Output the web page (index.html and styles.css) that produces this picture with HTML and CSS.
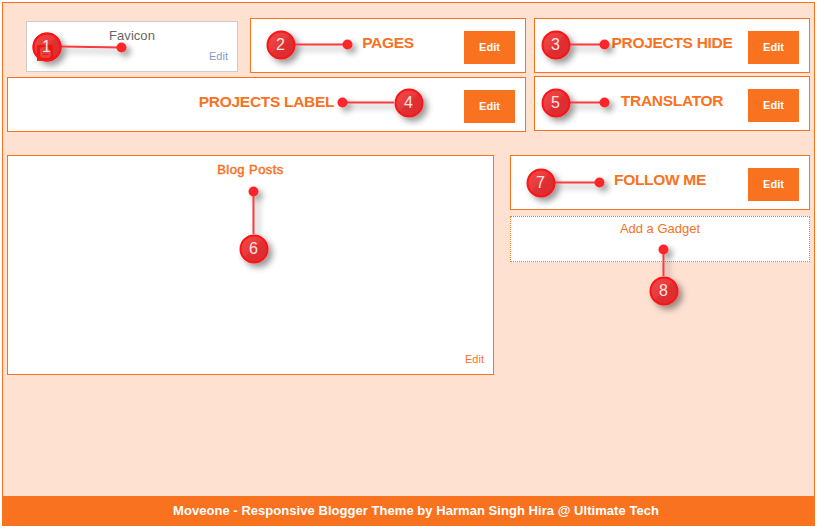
FILE: index.html
```html
<!DOCTYPE html>
<html lang="en">
<head>
<meta charset="utf-8">
<title>Moveone layout</title>
<link rel="stylesheet" href="styles.css">
</head>
<body>
<div class="frame">
  <main class="content">
    <div class="row top">
      <div class="left">
        <div class="row first">
          <section class="favicon"><h2>Favicon</h2><a class="link">Edit</a></section>
          <section class="box pages"><h2>PAGES</h2><a class="button">Edit</a></section>
        </div>
        <section class="box label"><h2>PROJECTS LABEL</h2><a class="button">Edit</a></section>
      </div>
      <div class="right">
        <section class="box"><h2>PROJECTS HIDE</h2><a class="button">Edit</a></section>
        <section class="box"><h2>TRANSLATOR</h2><a class="button">Edit</a></section>
      </div>
    </div>
    <div class="row bottom">
      <section class="posts"><h2>Blog Posts</h2><a class="link">Edit</a></section>
      <div class="side">
        <section class="box follow"><h2>FOLLOW ME</h2><a class="button">Edit</a></section>
        <section class="gadget"><a>Add a Gadget</a></section>
      </div>
    </div>
  </main>
  <footer class="footer">Moveone - Responsive Blogger Theme by Harman Singh Hira @ Ultimate Tech</footer>
</div>
<svg class="callouts" width="817" height="528" viewBox="0 0 817 528">
  <defs>
    <linearGradient id="disc" x1="0" y1="0" x2="1" y2="1">
      <stop offset="0" stop-color="#f44a4a"/><stop offset=".46" stop-color="#e63b3d"/><stop offset=".5" stop-color="#df3033"/><stop offset="1" stop-color="#df2b2e"/>
    </linearGradient>
    <filter id="shadow" filterUnits="userSpaceOnUse" x="0" y="0" width="817" height="528">
      <feDropShadow dx="4" dy="4" stdDeviation="3.4" flood-color="#000" flood-opacity=".4"/>
    </filter>
  </defs>
  <g filter="url(#shadow)">
    <g class="lines">
      <path d="M61 46.5L121 47.5M295 44.5H347M570 44.5H604M342 102.5H394M570 102.5H604M253.5 191V234M555 182.5H599M663.5 249V276"/>
    </g>
    <g class="dots">
      <circle cx="121.5" cy="47.5" r="5"/><circle cx="347.5" cy="44.5" r="5"/><circle cx="604.5" cy="44.5" r="5"/><circle cx="342.5" cy="102.5" r="5"/>
      <circle cx="604.5" cy="102.5" r="5"/><circle cx="253.5" cy="191.5" r="5"/><circle cx="599.5" cy="182.5" r="5"/><circle cx="663.5" cy="249.5" r="5"/>
    </g>
    <g class="discs">
      <circle cx="47" cy="47" r="13.5"/><circle cx="281" cy="45" r="13.5"/><circle cx="556" cy="45" r="13.5"/><circle cx="409" cy="103" r="13.5"/>
      <circle cx="556" cy="103" r="13.5"/><circle cx="254" cy="249" r="13.5"/><circle cx="541" cy="183" r="13.5"/><circle cx="664" cy="291" r="13.5"/>
    </g>
  </g>
  <g>
    <path fill="#e81a10" d="M37 45H53V59.5L50 60.3H37Z"/>
    <path fill="#c64b12" d="M37 59.5H42V61H37Z"/>
    <path fill="#e8403e" fill-rule="evenodd" d="M40 50q0-3 3-3h3q3 0 3 3v1q2 0 2 2v2q0 3-3 3h-5q-3 0-3-3ZM43 50v1h3v-1ZM43 54v1h5v-1Z"/>
    <circle cx="47" cy="47" r="13.5" fill="none" stroke="#fb1418" stroke-width="2"/>
  </g>
  <g class="numbers">
    <text x="46.5" y="52">1</text><text x="280.5" y="50">2</text><text x="555.5" y="50">3</text><text x="408.5" y="108">4</text>
    <text x="555.5" y="108">5</text><text x="253.5" y="254">6</text><text x="540.5" y="188">7</text><text x="663.5" y="296">8</text>
  </g>
</svg>
</body>
</html>
```
FILE: styles.css
```css
* { box-sizing: border-box; }
body { margin: 0; padding: 2px; background: #fff; font-family: "Liberation Sans", Arial, sans-serif; color: #f8721f; }
h2 { margin: 0; font-weight: 400; text-align: center; }
.frame { width: 813px; height: 524px; border: 1px solid #f8721f; background: #ffe1d2; display: flex; flex-direction: column; }
.content { flex: 1; padding: 15px 4px 0; }
.row { display: flex; }
.top { gap: 8px; }
.left { width: 519px; }
.right { width: 276px; display: flex; flex-direction: column; gap: 3px; }
.first { gap: 12px; padding-left: 19px; margin-bottom: 4px; }
.box { height: 55px; background: #fff; border: 1px solid #f8721f; display: grid; grid-template-columns: 1fr; }
.box > * { grid-area: 1 / 1; }
.box h2 { padding-top: 15px; font-size: 15.5px; line-height: 18px; font-weight: 700; letter-spacing: -.3px; }
.pages { width: 276px; }
.button { justify-self: end; width: 51px; height: 33px; margin: 12px 10px 0 0; background: #f8721f; color: #fff; font-size: 11px; font-weight: 700; line-height: 33px; text-align: center; }
.favicon { width: 212px; height: 51px; margin-top: 3px; background: #fff; border: 1px solid #ccc; display: flex; flex-direction: column; justify-content: space-between; padding: 6px 9px 8px; }
.favicon h2 { font-size: 13px; line-height: 15px; color: #666; letter-spacing: .05px; }
.link { align-self: flex-end; font-size: 11px; line-height: 13px; }
.favicon .link { color: #8899cc; }
.bottom { margin-top: 23px; gap: 16px; }
.posts { width: 487px; height: 220px; background: #fff; border: 1px solid #f8721f; display: flex; flex-direction: column; justify-content: space-between; padding: 6px 9px 8px; }
.posts h2 { font-size: 13px; line-height: 15px; letter-spacing: .45px; -webkit-text-stroke: .5px #f8721f; }
.side { width: 300px; display: flex; flex-direction: column; gap: 6px; }
.gadget { height: 46px; background: #fff; border: 1px dotted #f8721f; text-align: center; padding-top: 4px; font-size: 13px; line-height: 16px; }
.footer { height: 29px; padding-left: 15px; background: #f8721f; color: #fff; font-size: 13px; font-weight: 700; line-height: 29px; text-align: center; letter-spacing: .045px; }
.callouts { position: absolute; left: 0; top: 0; pointer-events: none; }
.lines { fill: none; stroke: #f83a3c; stroke-width: 2; }
.dots { fill: #fb272b; }
.discs { fill: url(#disc); stroke: #fb1418; stroke-width: 2; }
.numbers { fill: #ffe2e2; font-size: 16px; text-anchor: middle; }
```
